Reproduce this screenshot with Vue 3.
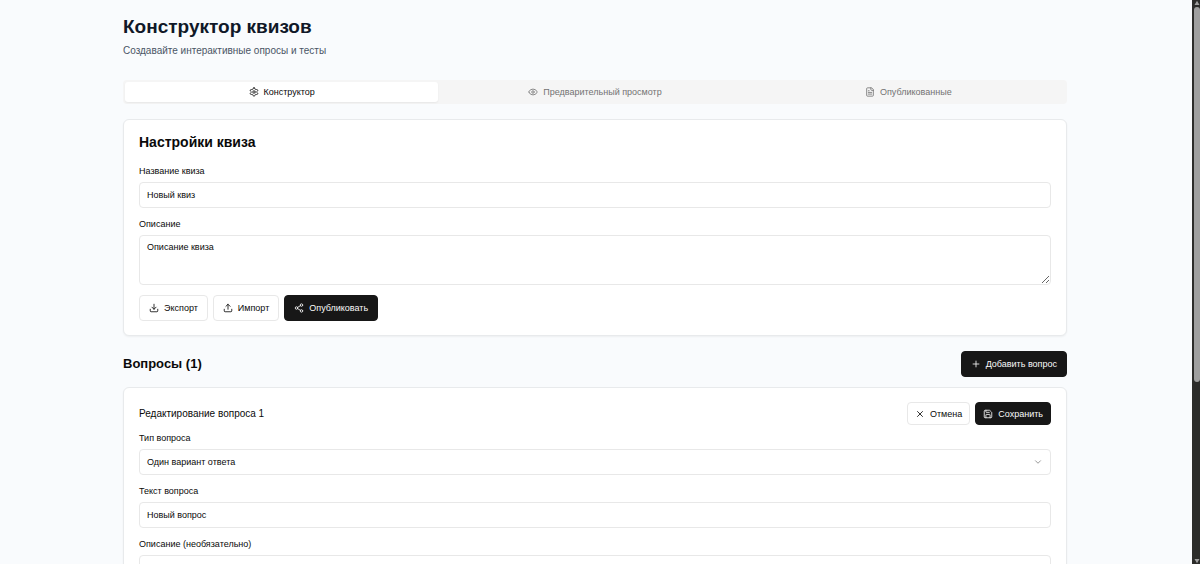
<script setup>
import { ref } from 'vue'

const tabs = [
  { id: 'builder', label: 'Конструктор', icon: 'settings' },
  { id: 'preview', label: 'Предварительный просмотр', icon: 'eye' },
  { id: 'published', label: 'Опубликованные', icon: 'file' },
]
const activeTab = ref('builder')

const icons = {
  settings:
    'M12.22 2h-.44a2 2 0 0 0-2 2v.18a2 2 0 0 1-1 1.73l-.43.25a2 2 0 0 1-2 0l-.15-.08a2 2 0 0 0-2.73.73l-.22.38a2 2 0 0 0 .73 2.73l.15.1a2 2 0 0 1 1 1.72v.51a2 2 0 0 1-1 1.74l-.15.09a2 2 0 0 0-.73 2.73l.22.38a2 2 0 0 0 2.73.73l.15-.08a2 2 0 0 1 2 0l.43.25a2 2 0 0 1 1 1.73V20a2 2 0 0 0 2 2h.44a2 2 0 0 0 2-2v-.18a2 2 0 0 1 1-1.73l.43-.25a2 2 0 0 1 2 0l.15.08a2 2 0 0 0 2.73-.73l.22-.39a2 2 0 0 0-.73-2.73l-.15-.08a2 2 0 0 1-1-1.74v-.5a2 2 0 0 1 1-1.74l.15-.09a2 2 0 0 0 .73-2.73l-.22-.38a2 2 0 0 0-2.73-.73l-.15.08a2 2 0 0 1-2 0l-.43-.25a2 2 0 0 1-1-1.73V4a2 2 0 0 0-2-2z M15 12a3 3 0 1 1-6 0a3 3 0 1 1 6 0',
  eye: 'M2.06 12.35a1 1 0 0 1 0-.7a10.75 10.75 0 0 1 19.88 0a1 1 0 0 1 0 .7a10.75 10.75 0 0 1-19.88 0 M15 12a3 3 0 1 1-6 0a3 3 0 1 1 6 0',
  file: 'M15 2H6a2 2 0 0 0-2 2v16a2 2 0 0 0 2 2h12a2 2 0 0 0 2-2V7Z M14 2v4a2 2 0 0 0 2 2h4 M10 9H8 M16 13H8 M16 17H8',
  download: 'M21 15v4a2 2 0 0 1-2 2H5a2 2 0 0 1-2-2v-4 M7 10l5 5l5-5 M12 15V3',
  upload: 'M21 15v4a2 2 0 0 1-2 2H5a2 2 0 0 1-2-2v-4 M17 8l-5-5l-5 5 M12 3v12',
  share:
    'M21 5a3 3 0 1 1-6 0a3 3 0 1 1 6 0 M9 12a3 3 0 1 1-6 0a3 3 0 1 1 6 0 M21 19a3 3 0 1 1-6 0a3 3 0 1 1 6 0 M8.59 13.51l6.83 3.98 M15.41 6.51l-6.82 3.98',
  plus: 'M5 12h14 M12 5v14',
  close: 'M18 6L6 18 M6 6l12 12',
  save: 'M15.2 3a2 2 0 0 1 1.4.6l3.8 3.8a2 2 0 0 1 .6 1.4V19a2 2 0 0 1-2 2H5a2 2 0 0 1-2-2V5a2 2 0 0 1 2-2z M17 21v-7a1 1 0 0 0-1-1H8a1 1 0 0 0-1 1v7 M7 3v4a1 1 0 0 0 1 1h7',
  chevron: 'M6 9l6 6l6-6',
}

const quiz = ref({ title: 'Новый квиз', description: 'Описание квиза' })
const question = ref({ type: 'single', text: 'Новый вопрос', description: '' })
</script>

<template>
  <div class="window">
    <main class="page">
      <div class="container">
        <header class="intro">
          <h1>Конструктор квизов</h1>
          <p>Создавайте интерактивные опросы и тесты</p>
        </header>

        <div class="tabs" role="tablist">
          <button
            v-for="tab in tabs"
            :key="tab.id"
            type="button"
            role="tab"
            class="tab"
            :class="{ active: tab.id === activeTab }"
            :aria-selected="tab.id === activeTab"
            @click="activeTab = tab.id"
          >
            <svg class="icon" viewBox="0 0 24 24" aria-hidden="true"><path :d="icons[tab.icon]" /></svg>
            {{ tab.label }}
          </button>
        </div>

        <section class="card">
          <h2>Настройки квиза</h2>
          <div class="field">
            <label for="quiz-title">Название квиза</label>
            <input id="quiz-title" v-model="quiz.title" type="text" />
          </div>
          <div class="field">
            <label for="quiz-description">Описание</label>
            <textarea id="quiz-description" v-model="quiz.description"></textarea>
          </div>
          <div class="actions">
            <button type="button" class="btn">
              <svg class="icon" viewBox="0 0 24 24" aria-hidden="true"><path :d="icons.download" /></svg>
              Экспорт
            </button>
            <button type="button" class="btn">
              <svg class="icon" viewBox="0 0 24 24" aria-hidden="true"><path :d="icons.upload" /></svg>
              Импорт
            </button>
            <button type="button" class="btn primary">
              <svg class="icon" viewBox="0 0 24 24" aria-hidden="true"><path :d="icons.share" /></svg>
              Опубликовать
            </button>
          </div>
        </section>

        <div class="section-head">
          <h3>Вопросы (1)</h3>
          <button type="button" class="btn primary">
            <svg class="icon" viewBox="0 0 24 24" aria-hidden="true"><path :d="icons.plus" /></svg>
            Добавить вопрос
          </button>
        </div>

        <section class="card">
          <div class="editor-head">
            <h4>Редактирование вопроса 1</h4>
            <div class="actions">
              <button type="button" class="btn small">
                <svg class="icon" viewBox="0 0 24 24" aria-hidden="true"><path :d="icons.close" /></svg>
                Отмена
              </button>
              <button type="button" class="btn small primary">
                <svg class="icon" viewBox="0 0 24 24" aria-hidden="true"><path :d="icons.save" /></svg>
                Сохранить
              </button>
            </div>
          </div>
          <div class="field">
            <label for="question-type">Тип вопроса</label>
            <div class="select">
              <select id="question-type" v-model="question.type">
                <option value="single">Один вариант ответа</option>
              </select>
              <svg class="icon chevron" viewBox="0 0 24 24" aria-hidden="true"><path :d="icons.chevron" /></svg>
            </div>
          </div>
          <div class="field">
            <label for="question-text">Текст вопроса</label>
            <input id="question-text" v-model="question.text" type="text" />
          </div>
          <div class="field">
            <label for="question-description">Описание (необязательно)</label>
            <textarea id="question-description" v-model="question.description"></textarea>
          </div>
        </section>
      </div>
    </main>

    <div class="scrollbar" aria-hidden="true">
      <svg class="arrow" viewBox="0 0 6 6"><path d="M3 1L6 6H0Z" /></svg>
      <div class="track"><div class="thumb"></div></div>
      <svg class="arrow" viewBox="0 0 6 6"><path d="M0 0H6L3 5Z" /></svg>
    </div>
  </div>
</template>

<style>
body {
  margin: 0;
  overflow: hidden;
}
</style>

<style scoped>
* {
  box-sizing: border-box;
}
.window {
  display: flex;
  height: 100vh;
  background: #f9fbfd;
  color: #0a0a0a;
  font-family: "Liberation Sans", Arial, sans-serif;
  font-size: 9px;
  line-height: 12px;
}
.page {
  flex: 1;
  min-width: 0;
  padding-right: 2px;
  overflow: hidden;
}
.container {
  max-width: 976px;
  margin: 0 auto;
  padding: 16px;
}
h1,
h2,
h3,
h4,
p {
  margin: 0;
}
.intro {
  margin-bottom: 21px;
}
h1 {
  font-size: 19px;
  line-height: 22px;
  color: #101828;
}
.intro p {
  margin-top: 5px;
  font-size: 10px;
  line-height: 16px;
  color: #4a5565;
}
.tabs {
  display: grid;
  grid-template-columns: repeat(3, 1fr);
  padding: 2px;
  margin-bottom: 15px;
  border-radius: 4px;
  background: #f5f5f5;
}
.tab {
  display: flex;
  align-items: center;
  justify-content: center;
  gap: 5px;
  height: 20px;
  padding: 0;
  border: 0;
  border-radius: 3px;
  background: transparent;
  color: #737373;
  font: inherit;
}
.tab.active {
  background: #fff;
  color: #0a0a0a;
  box-shadow: 0 1px 2px rgba(0, 0, 0, 0.06);
}
.icon {
  flex: none;
  width: 10px;
  height: 10px;
  fill: none;
  stroke: currentColor;
  stroke-width: 2;
  stroke-linecap: round;
  stroke-linejoin: round;
}
.card {
  padding: 14px 15px;
  border: 1px solid #e8eaec;
  border-radius: 6px;
  background: #fff;
  box-shadow: 0 1px 2px rgba(0, 0, 0, 0.05);
}
h2 {
  margin-bottom: 15px;
  font-size: 14px;
  line-height: 16px;
}
.field {
  display: flex;
  flex-direction: column;
  gap: 5px;
  margin-bottom: 10px;
}
input,
textarea,
select {
  display: block;
  width: 100%;
  height: 26px;
  margin: 0;
  padding: 0 7px;
  border: 1px solid #e8e8e8;
  border-radius: 4px;
  background: #fff;
  color: inherit;
  font: inherit;
  outline: 0;
}
textarea {
  height: 50px;
  padding: 5px 7px;
  resize: vertical;
}
.select {
  position: relative;
}
select {
  appearance: none;
}
.chevron {
  position: absolute;
  top: 8px;
  right: 8px;
  color: #858585;
  pointer-events: none;
}
.actions {
  display: flex;
  gap: 5px;
}
.btn {
  display: flex;
  align-items: center;
  gap: 5px;
  height: 26px;
  padding: 0 9px;
  border: 1px solid #e8e8e8;
  border-radius: 4px;
  background: #fff;
  color: #0a0a0a;
  font: inherit;
}
.btn.primary {
  border-color: #171717;
  background: #171717;
  color: #fafafa;
}
.btn.small {
  height: 23px;
  padding: 0 7px;
}
.section-head {
  display: flex;
  align-items: center;
  justify-content: space-between;
  margin: 15px 0 10px;
}
h3 {
  font-size: 13px;
  line-height: 18px;
}
.editor-head {
  display: flex;
  align-items: center;
  justify-content: space-between;
  margin-bottom: 7px;
}
h4 {
  font-size: 10px;
  font-weight: 400;
  line-height: 16px;
}
.scrollbar {
  display: flex;
  flex: none;
  flex-direction: column;
  align-items: center;
  width: 8px;
  padding-left: 1px;
  background: #2c2c2a;
}
.arrow {
  width: 6px;
  height: 5px;
  fill: #9f9f9f;
}
.track {
  flex: 1;
  width: 6px;
  padding-top: 2px;
}
.thumb {
  height: 68%;
  border-radius: 3px;
  background: #9f9f9f;
}
</style>
